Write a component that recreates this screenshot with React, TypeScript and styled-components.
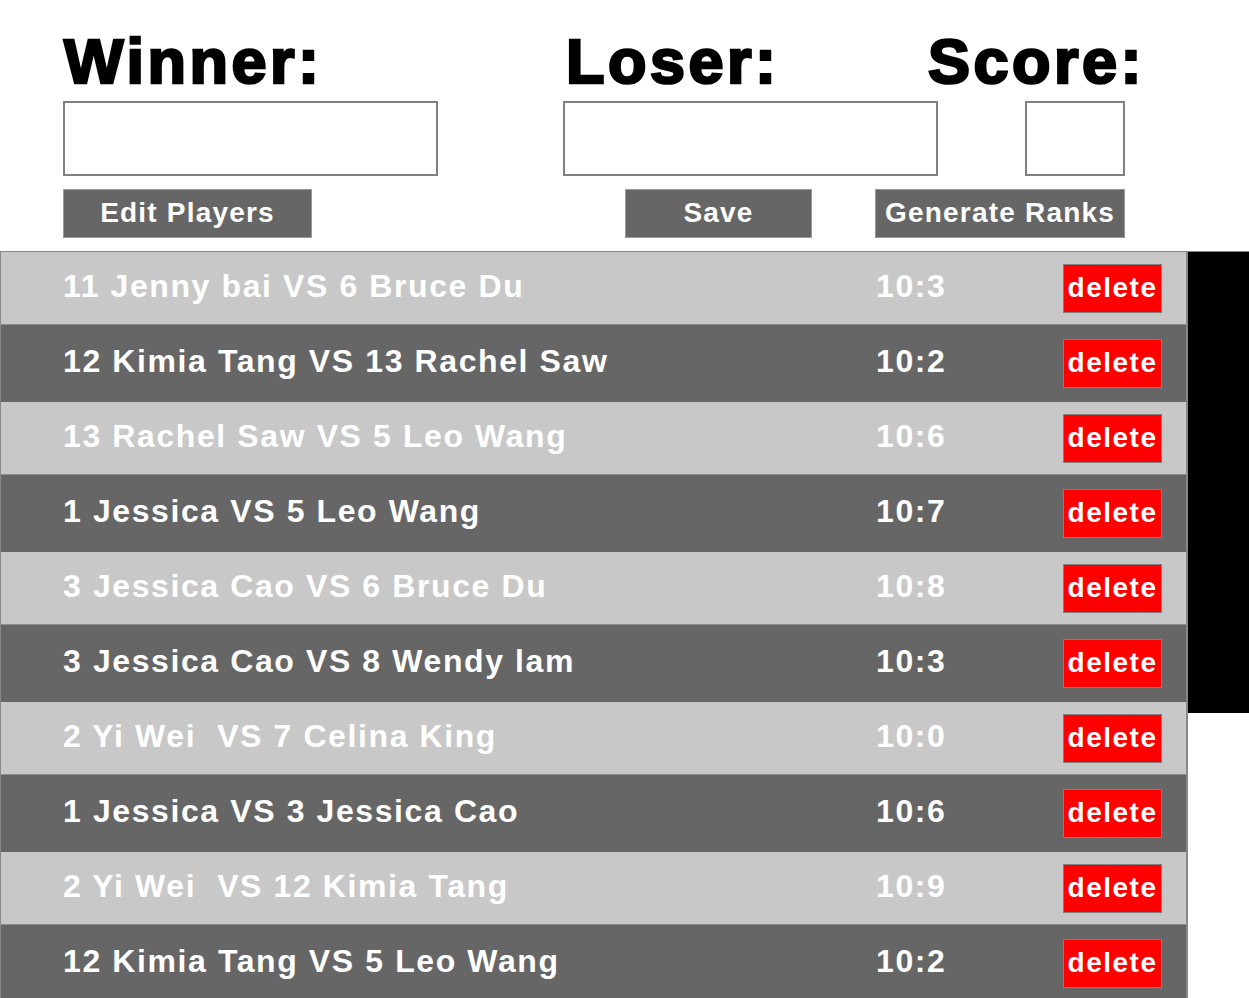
import styled, { createGlobalStyle } from 'styled-components';

const GlobalStyle = createGlobalStyle`
    html, body {
        margin: 0;
        padding: 0;
        background: #fff;
        font-family: "Liberation Sans", Arial, sans-serif;
    }
    * {
        box-sizing: border-box;
    }
`;

const Page = styled.div`
    display: flex;
    flex-direction: column;
    height: 100vh;
    overflow: hidden;
`;

const Header = styled.div`
    display: flex;
    flex-direction: column;
    padding: 30px 0 0 63px;
`;

const LabelRow = styled.div`
    display: flex;
    align-items: flex-start;
`;

const Label = styled.h1<{ $width?: number }>`
    margin: 0;
    width: ${p => (p.$width ? `${p.$width}px` : 'auto')};
    font-size: 63px;
    line-height: 63px;
    font-weight: 700;
    letter-spacing: 3.5px;
    color: #000;
    -webkit-text-stroke: 2.6px #000;
    padding-left: 1px;
`;

const InputRow = styled.div`
    display: flex;
    margin-top: 8px;
`;

const Field = styled.input<{ $width: number; $offset?: number }>`
    width: ${p => p.$width}px;
    height: 75px;
    margin-left: ${p => p.$offset ?? 0}px;
    border: 2px solid #808080;
    background: #fff;
    padding: 0 8px;
    font-size: 24px;
    font-family: inherit;
`;

const ButtonRow = styled.div`
    display: flex;
    margin-top: 13px;
`;

const ActionButton = styled.button<{ $width: number; $offset?: number }>`
    width: ${p => p.$width}px;
    height: 49px;
    margin-left: ${p => p.$offset ?? 0}px;
    background: #666;
    border: 1px solid #9a9a9a;
    color: #fff;
    font-family: inherit;
    font-size: 28px;
    line-height: 45px;
    font-weight: 700;
    letter-spacing: 1.2px;
    padding: 0 0 3px;
    cursor: pointer;
`;

const ListArea = styled.div`
    flex: 1;
    min-height: 0;
    display: flex;
    margin-top: 13px;
    border-top: 1px solid #888;
`;

const MatchList = styled.div`
    flex: 1;
    min-width: 0;
    overflow: hidden;
`;

const ScrollRail = styled.div`
    width: 61px;
    flex-shrink: 0;
    background: #fff;
`;

const ScrollThumb = styled.div`
    height: 461px;
    background: #000;
`;

const MatchRow = styled.div<{ $light: boolean }>`
    display: grid;
    grid-template-columns: 813px 187px 99px;
    align-items: center;
    height: ${p => (p.$light ? 73 : 77)}px;
    padding: 0 0 3px 62px;
    background: ${p => (p.$light ? '#c8c8c8' : '#666')};
    border-left: 1px solid #888;
    border-right: 2px solid #888;
    border-bottom: 1px solid ${p => (p.$light ? '#8c8c8c' : '#666')};
    color: #fff;
    font-size: 32px;
    font-weight: 700;
    letter-spacing: 1.6px;
`;

const Players = styled.span`
    white-space: pre;
`;

const Result = styled.span`
    white-space: nowrap;
`;

const DeleteButton = styled.button`
    width: 99px;
    height: 49px;
    margin-top: 3px;
    background: #f00;
    border: 1px solid #808080;
    color: #fff;
    font-family: inherit;
    font-size: 28px;
    line-height: 45px;
    font-weight: 700;
    letter-spacing: 1.5px;
    padding: 0 0 3px;
    cursor: pointer;
`;

const matches = [
    { players: '11 Jenny bai VS 6 Bruce Du', score: '10:3' },
    { players: '12 Kimia Tang VS 13 Rachel Saw', score: '10:2' },
    { players: '13 Rachel Saw VS 5 Leo Wang', score: '10:6' },
    { players: '1 Jessica VS 5 Leo Wang', score: '10:7' },
    { players: '3 Jessica Cao VS 6 Bruce Du', score: '10:8' },
    { players: '3 Jessica Cao VS 8 Wendy lam', score: '10:3' },
    { players: '2 Yi Wei  VS 7 Celina King', score: '10:0' },
    { players: '1 Jessica VS 3 Jessica Cao', score: '10:6' },
    { players: '2 Yi Wei  VS 12 Kimia Tang', score: '10:9' },
    { players: '12 Kimia Tang VS 5 Leo Wang', score: '10:2' },
];

export default function App() {
    return (
        <Page>
            <GlobalStyle />
            <Header>
                <LabelRow>
                    <Label $width={502}>Winner:</Label>
                    <Label $width={362}>Loser:</Label>
                    <Label>Score:</Label>
                </LabelRow>
                <InputRow>
                    <Field $width={375} />
                    <Field $width={375} $offset={125} />
                    <Field $width={100} $offset={87} />
                </InputRow>
                <ButtonRow>
                    <ActionButton $width={249}>Edit Players</ActionButton>
                    <ActionButton $width={187} $offset={313}>Save</ActionButton>
                    <ActionButton $width={250} $offset={63}>Generate Ranks</ActionButton>
                </ButtonRow>
            </Header>
            <ListArea>
                <MatchList>
                    {matches.map((m, i) => (
                        <MatchRow key={i} $light={i % 2 === 0}>
                            <Players>{m.players}</Players>
                            <Result>{m.score}</Result>
                            <DeleteButton>delete</DeleteButton>
                        </MatchRow>
                    ))}
                </MatchList>
                <ScrollRail>
                    <ScrollThumb />
                </ScrollRail>
            </ListArea>
        </Page>
    );
}
